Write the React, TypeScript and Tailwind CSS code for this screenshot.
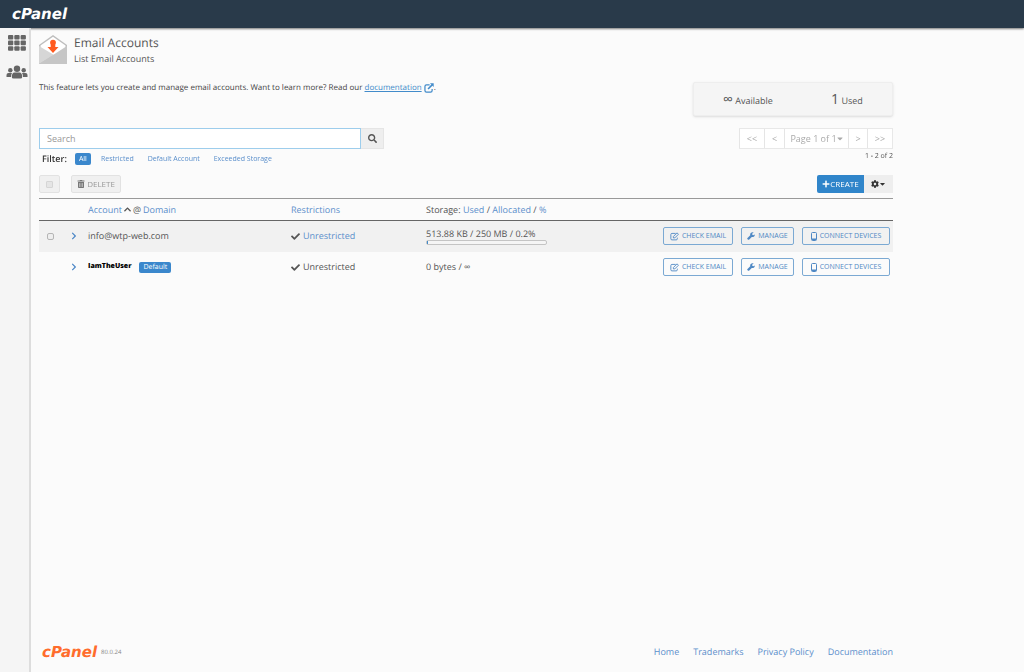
import React, { useState } from 'react';
import {
  FaCaretDown,
  FaCheck,
  FaChevronRight,
  FaChevronUp,
  FaCog,
  FaPlus,
  FaSearch,
  FaTrashAlt,
} from 'react-icons/fa';

interface Account {
  id: number;
  name: string;
  isDefault: boolean;
  used: string;
  percent: number | null;
}

const accounts: Account[] = [
  { id: 1, name: 'info@wtp-web.com', isDefault: false, used: '513.88 KB / 250 MB / 0.2%', percent: 0.2 },
  { id: 2, name: 'IamTheUser', isDefault: true, used: '0 bytes / ∞', percent: null },
];

const filters = ['All', 'Restricted', 'Default Account', 'Exceeded Storage'];
const footerLinks = ['Home', 'Trademarks', 'Privacy Policy', 'Documentation'];

const GridIcon: React.FC = () => (
  <svg viewBox="0 0 18 16" className="w-[18px] h-4" fill="#666">
    {[0, 6.3, 12.6].map((x) =>
      [0, 5.6, 11.2].map((y) => <rect key={`${x}-${y}`} x={x} y={y} width="5.3" height="4.6" rx="1" />)
    )}
  </svg>
);

const UsersIcon: React.FC = () => (
  <svg viewBox="0 0 22 14" className="w-[22px] h-[14px]" fill="#666">
    <circle cx="4.3" cy="5.2" r="2.2" />
    <circle cx="17.7" cy="5.2" r="2.2" />
    <path d="M0.5 12V10Q0.5 8 2.5 8H6Q5 9.5 5 12ZM21.5 12V10Q21.5 8 19.5 8H16Q17 9.5 17 12Z" />
    <circle cx="11" cy="3.7" r="3.2" />
    <path d="M5.8 12Q5.8 7.5 8.5 7.5H13.5Q16.2 7.5 16.2 12Q16.2 13.5 14.5 13.5H7.5Q5.8 13.5 5.8 12Z" />
  </svg>
);

const EnvelopeIcon: React.FC = () => (
  <svg viewBox="0 0 28 29" className="w-7 h-[29px]">
    <path d="M0 10L14 0L28 10V29H0Z" fill="#bdbdbd" />
    <path d="M1.5 10.5L14 1.8L26.5 10.5V13L14 21L1.5 13Z" fill="#fff" />
    <path d="M0 11L15 20L0 29Z" fill="#d6d6d6" />
    <path d="M28 11V29H0Z" fill="#c6c6c6" />
    <path d="M11.7 6.5H16.3V12H19.5L14 18L8.5 12H11.7Z" fill="#ff5a1f" />
    <circle cx="14" cy="7.5" r="2.8" fill="#ff5a1f" />
  </svg>
);

const ExternalIcon: React.FC = () => (
  <svg viewBox="0 0 16 16" className="w-[10px] h-[10px] inline-block" fill="none" stroke="currentColor" strokeWidth="2">
    <path d="M9 3H4Q1.5 3 1.5 5.5V12Q1.5 14.5 4 14.5H10.5Q13 14.5 13 12V9.5" />
    <path d="M6.5 9.5L13 3" strokeWidth="2.5" />
    <path d="M9.5 0.5H15.5V6.5Z" fill="currentColor" stroke="none" />
  </svg>
);

const EditIcon: React.FC = () => (
  <svg viewBox="0 0 16 16" className="w-[9px] h-[9px]" fill="none" stroke="currentColor" strokeWidth="1.6">
    <path d="M10 2.5H3.5Q1.5 2.5 1.5 4.5V12Q1.5 14 3.5 14H11Q13 14 13 12V10" />
    <path d="M6 10.5V8L12.5 1.5L15 4L8.5 10.5Z" />
  </svg>
);

const WrenchIcon: React.FC = () => (
  <svg viewBox="0 0 16 16" className="w-2 h-2" fill="currentColor">
    <path d="M13.5 1L10.5 3V5.5L12.5 6.500L15.500 4.800Q16 8 13.500 9.500Q11.500 10.500 9.500 9.800L4 15.300Q2.800 16 1.600 15L0.800 14.200Q0 13 1 12L6.500 6.500Q5.800 4 7.500 2Q10 -0.500 13.500 1Z" />
  </svg>
);

const PhoneIcon: React.FC = () => (
  <svg viewBox="0 0 12 18" className="w-[6px] h-[9px]" fill="none" stroke="currentColor">
    <rect x="1" y="1" width="10" height="16" rx="2" strokeWidth="2" />
    <path d="M2 14.5H10" strokeWidth="3" />
  </svg>
);

const logoClass = "text-[15px] leading-5 font-bold italic font-['DejaVu_Sans',sans-serif]";
const actionClass =
  'h-[18px] flex items-center justify-center gap-[3px] border border-[#7ba9d3] rounded-[2px] text-[7px] text-[#4f88c4] whitespace-nowrap';
const pageClass = 'h-full border-l border-[#e5e5e5] text-[#aaa]';

const App: React.FC = () => {
  const [search, setSearch] = useState('');
  const [filter, setFilter] = useState('All');

  return (
    <div className="min-h-screen flex flex-col bg-[#fbfbfb] text-[#555] text-[9px] leading-3 font-['Open_Sans',sans-serif] [text-rendering:geometricPrecision]">
      <header className="h-7 px-3 flex items-center bg-[#293a4a] shadow-[0_1px_2px_#777]">
        <a href="#home" className={`${logoClass} text-white`}>cPanel</a>
      </header>

      <div className="flex-1 flex">
        <nav className="w-[31px] shrink-0 flex flex-col items-center gap-[14px] pt-[7px] pl-1 bg-[#f5f5f5] border-r-2 border-[#ddd]">
          <a href="#apps" aria-label="Applications"><GridIcon /></a>
          <a href="#users" aria-label="User manager"><UsersIcon /></a>
        </nav>

        <div className="flex-1 max-w-[870px] px-2 flex flex-col">
          <main className="flex-1">
            <div className="flex gap-[7px] pt-[7px]">
              <EnvelopeIcon />
              <div>
                <h1 className="text-[12px] leading-4">Email Accounts</h1>
                <h2 className="leading-4">List Email Accounts</h2>
              </div>
            </div>

            <div className="flex justify-between items-start pt-[15px]">
              <p className="text-[8px] text-[#444]">
                This feature lets you create and manage email accounts. Want to learn more? Read our{' '}
                <a href="#docs" className="text-[#428bca]"><span className="underline">documentation</span> <ExternalIcon /></a>.
              </p>
              <div className="w-[200px] h-[34px] pt-[2px] flex items-center justify-around bg-[#f5f5f5] border border-[#eee] rounded-[2px] shadow-sm">
                <span><span className="text-[14px]">∞</span> Available</span>
                <span><span className="text-[14px]">1</span> Used</span>
              </div>
            </div>

            <div className="flex justify-between items-start pt-3">
              <div>
                <div className="flex h-[21px]">
                  <input
                    type="text"
                    aria-label="Search"
                    placeholder="Search"
                    autoFocus
                    value={search}
                    onChange={(e) => setSearch(e.target.value)}
                    className="w-[322px] px-[7px] bg-white border border-[#9dcdec] placeholder:text-[#999] outline-none"
                  />
                  <button type="button" aria-label="Run search" className="w-[23px] flex items-center justify-center bg-[#eee] border border-l-0 border-[#e5e5e5]">
                    <FaSearch />
                  </button>
                </div>
                <div className="flex items-center h-5 pl-[3px] text-[7px]">
                  <span className="text-[9px] font-semibold text-[#333] mr-2">Filter:</span>
                  {filters.map((name) => (
                    <button
                      key={name}
                      type="button"
                      onClick={() => setFilter(name)}
                      className={
                        filter === name
                          ? 'h-3 px-1 mr-[10px] rounded-[2px] bg-[#3a87cc] text-white'
                          : 'h-3 mr-[14px] text-[#5b8fcb]'
                      }
                    >
                      {name}
                    </button>
                  ))}
                </div>
              </div>
              <div className="flex flex-col items-end">
                <div className="flex h-[21px] bg-white border border-l-0 border-[#e8e8e8]">
                  <button type="button" className={`${pageClass} w-[25px]`}>&lt;&lt;</button>
                  <button type="button" className={`${pageClass} w-5`}>&lt;</button>
                  <button type="button" className={`${pageClass} w-16 flex items-center justify-center`}>
                    Page 1 of 1<FaCaretDown className="w-[6px]" />
                  </button>
                  <button type="button" className={`${pageClass} w-[19px]`}>&gt;</button>
                  <button type="button" className={`${pageClass} w-[25px]`}>&gt;&gt;</button>
                </div>
                <p className="mt-[2px] text-[7px]">1 - 2 of 2</p>
              </div>
            </div>

            <div className="flex justify-between h-[18px] mt-[6px] mb-[5px]">
              <div className="flex gap-[11px] text-[8px] text-[#999]">
                <label className="w-[21px] flex items-center justify-center bg-[#f0f0f0] border border-[#e2e2e2] rounded-[2px]">
                  <input type="checkbox" aria-label="Select all" className="appearance-none w-[7px] h-[7px] bg-[#e5e5e5] border border-[#d5d5d5] rounded-[1px]" />
                </label>
                <button type="button" className="w-[50px] flex items-center justify-center gap-[2px] bg-[#f0f0f0] border border-[#e2e2e2] rounded-[2px]">
                  <FaTrashAlt className="text-[#777]" />DELETE
                </button>
              </div>
              <div className="flex text-[8px]">
                <button type="button" className="w-[47px] flex items-center justify-center bg-[#3085ca] rounded-l-[2px] text-white">
                  <FaPlus />CREATE
                </button>
                <button type="button" aria-label="Settings" className="w-[29px] flex items-center justify-center bg-[#eee] text-[#333]">
                  <FaCog /><FaCaretDown className="w-[7px]" />
                </button>
              </div>
            </div>

            <table className="w-full table-fixed border-collapse">
              <thead>
                <tr className="h-[22px] border-t border-b border-t-[#999] border-b-[#666] text-left">
                  <th className="w-6" />
                  <th className="w-[25px]" />
                  <th className="w-[203px] font-normal">
                    <span className="flex items-center gap-[2px]">
                      <a href="#account" className="text-[#5b8fcb]">Account</a>
                      <FaChevronUp className="w-[7px]" />@
                      <a href="#domain" className="text-[#5b8fcb]">Domain</a>
                    </span>
                  </th>
                  <th className="w-[135px] font-normal"><a href="#restrictions" className="text-[#5b8fcb]">Restrictions</a></th>
                  <th className="font-normal">
                    Storage: <a href="#used" className="text-[#5b8fcb]">Used</a> /{' '}
                    <a href="#allocated" className="text-[#5b8fcb]">Allocated</a> /{' '}
                    <a href="#percent" className="text-[#5b8fcb]">%</a>
                  </th>
                  <th className="w-[230px]" />
                </tr>
              </thead>
              <tbody>
                {accounts.map((account) => (
                  <tr key={account.id} className="h-[31px] odd:bg-[#f1f1f1]">
                    <td className="pl-2">
                      {!account.isDefault && (
                        <input
                          type="checkbox"
                          aria-label={`Select ${account.name}`}
                          className="block appearance-none w-[7px] h-[7px] bg-[#eee] border border-[#b5b5b5] rounded-[2px]"
                        />
                      )}
                    </td>
                    <td className="pl-2">
                      <button type="button" aria-label="Expand" className="block text-[#4b86c6]"><FaChevronRight className="h-2 w-[6px]" /></button>
                    </td>
                    <td>
                      {account.isDefault ? (
                        <span className="flex items-center gap-2">
                          <strong className="text-[7px] font-extrabold text-black">{account.name}</strong>
                          <span className="h-[11px] px-1 rounded-[2px] bg-[#3a87cc] text-white text-[7px] leading-[11px]">Default</span>
                        </span>
                      ) : (
                        account.name
                      )}
                    </td>
                    <td>
                      <span className="flex items-center gap-[3px]">
                        <FaCheck />
                        {account.isDefault ? 'Unrestricted' : <a href="#unrestricted" className="text-[#5b8fcb]">Unrestricted</a>}
                      </span>
                    </td>
                    <td>
                      {account.used}
                      {account.percent !== null && (
                        <div className="w-[121px] h-[5px] border border-[#c4c4c4] rounded-[2px] bg-[#f5f5f5]">
                          <div className="h-full bg-[#428bca]" style={{ width: `${account.percent}%` }} />
                        </div>
                      )}
                    </td>
                    <td>
                      <div className="flex justify-end gap-2 pr-[3px]">
                        <button type="button" className={`${actionClass} w-[70px]`}><EditIcon />CHECK EMAIL</button>
                        <button type="button" className={`${actionClass} w-[53px]`}><WrenchIcon />MANAGE</button>
                        <button type="button" className={`${actionClass} w-[88px]`}><PhoneIcon />CONNECT DEVICES</button>
                      </div>
                    </td>
                  </tr>
                ))}
              </tbody>
            </table>
          </main>

          <footer className="h-10 flex items-center justify-between pl-[3px]">
            <div className="flex items-center gap-1">
              <a href="#cpanel" className={`${logoClass} text-[#ff6c2c]`}>cPanel</a>
              <span className="text-[6px] text-[#888]">80.0.24</span>
            </div>
            <div className="flex gap-[14px] text-[#5b8fcb]">
              {footerLinks.map((name) => (
                <a key={name} href="#footer">{name}</a>
              ))}
            </div>
          </footer>
        </div>
      </div>
    </div>
  );
};

export default App;
